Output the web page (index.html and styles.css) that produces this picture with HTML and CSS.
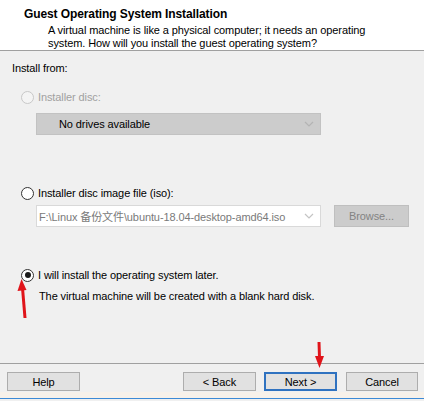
FILE: index.html
```html
<!DOCTYPE html>
<html lang="en">
<head>
  <meta charset="UTF-8" />
  <title>New Virtual Machine Wizard</title>
  <link rel="stylesheet" href="styles.css">
</head>
<body>
  <div class="wizard">
    <!-- page header -->
    <div class="head">
      <h1>Guest Operating System Installation</h1>
      <p>A virtual machine is like a physical computer; it needs an operating<br>system. How will you install the guest operating system?</p>
    </div>

    <div class="page">
      <div class="group-label">Install from:</div>

      <div class="radio disabled"><span class="circle"></span>Installer disc:</div>
      <div class="field-row first">
        <div class="combo off">
          <span class="combo-text">No drives available</span>
          <svg class="chev" width="10" height="6" viewBox="0 0 10 6"><path d="M1 1 L5 5 L9 1" fill="none" stroke="#b4b4b4" stroke-width="1.2"/></svg>
        </div>
      </div>

      <div class="radio iso"><span class="circle"></span>Installer disc image file (iso):</div>
      <div class="field-row second">
        <div class="combo grey">
          <span class="combo-text path">F:\Linux 备份文件\ubuntu-18.04-desktop-amd64.iso</span>
          <svg class="chev" width="10" height="6" viewBox="0 0 10 6"><path d="M1 1 L5 5 L9 1" fill="none" stroke="#c4c4c4" stroke-width="1.2"/></svg>
        </div>
        <button class="btn browse" disabled>Browse...</button>
      </div>

      <div class="radio later checked"><span class="circle"></span>I will install the operating system later.</div>
      <p class="note">The virtual machine will be created with a blank hard disk.</p>
    </div>

    <div class="foot">
      <button class="btn">Help</button>
      <div class="spacer"></div>
      <button class="btn">&lt; Back</button>
      <button class="btn next">Next &gt;</button>
      <button class="btn cancel">Cancel</button>
    </div>
    <div class="edge"></div>

    <!-- red hint arrows drawn over the dialog -->
    <svg class="hint hint-radio" width="14" height="42" viewBox="0 0 14 42">
      <path d="M9 40 L6.5 10" stroke="#e0141a" stroke-width="3" fill="none"/>
      <path d="M5.5 1 L1.5 13 L10.5 12 Z" fill="#e0141a"/>
    </svg>
    <svg class="hint hint-next" width="14" height="28" viewBox="0 0 14 28">
      <path d="M6 0 L6.5 16" stroke="#e0141a" stroke-width="3" fill="none"/>
      <path d="M2 14 L11 14 L6.5 26 Z" fill="#e0141a"/>
    </svg>
  </div>
</body>
</html>
```

FILE: styles.css
```css
body {
  margin: 0;
  background: #f0f0f0;
  font-family: "Liberation Sans", "Noto Sans CJK SC", sans-serif;
  font-size: 11px;
  letter-spacing: -0.1px;
  color: #000;
}
.wizard {
  position: relative;
  width: 424px;
  height: 401px;
  overflow: hidden;
  background: #f0f0f0;
}
.head {
  background: #fff;
  height: 51px;
  box-sizing: border-box;
  border-bottom: 1px solid #a0a0a0;
  padding-top: 6px;
}
.head h1 {
  margin: 0 0 2px 24px;
  font-size: 12px;
  font-weight: bold;
  letter-spacing: -0.1px;
  line-height: 16px;
}
.head p {
  margin: 0 0 0 48px;
  line-height: 13px;
  white-space: nowrap;
}
.page {
  height: 312px;
  box-sizing: border-box;
  padding: 9px 0 0 12px;
}
.group-label {
  line-height: 16px;
}
.radio {
  display: flex;
  align-items: center;
  line-height: 16px;
  margin-left: 9px;
}
.radio .circle {
  width: 11px;
  height: 11px;
  border: 1px solid #333;
  border-radius: 50%;
  background: #fff;
  margin-right: 4px;
  position: relative;
}
.radio.disabled {
  margin-top: 13px;
  color: #a0a0a0;
}
.radio.disabled .circle {
  border-color: #c8c8c8;
  background: #f4f4f4;
}
.radio.iso {
  margin-top: 50px;
}
.radio.later {
  margin-top: 40px;
}
.radio.checked .circle::after {
  content: "";
  position: absolute;
  left: 2.5px;
  top: 2.5px;
  width: 6px;
  height: 6px;
  border-radius: 50%;
  background: #1a1a1a;
}
.field-row {
  display: flex;
  margin-left: 24px;
}
.field-row.first {
  margin-top: 8px;
}
.field-row.second {
  margin-top: 4px;
}
.combo {
  width: 285px;
  height: 22px;
  box-sizing: border-box;
  display: flex;
  align-items: center;
  justify-content: space-between;
  padding: 0 6px 0 2px;
  white-space: nowrap;
}
.combo.off {
  background: #cccccc;
  border: 1px solid #c2c2c2;
}
.combo.off .combo-text {
  padding-left: 20px;
}
.combo.grey {
  background: #fff;
  border: 1px solid #d9d9d9;
}
.combo-text.path {
  color: #7a7a7a;
  padding-right: 6px;
}
.btn {
  font-family: inherit;
  font-size: 11px;
  letter-spacing: -0.1px;
  width: 73px;
  height: 19px;
  padding: 0;
  background: #e1e1e1;
  border: 1px solid #adadad;
  color: #000;
  line-height: 16px;
}
.btn.browse {
  margin-left: 13px;
  width: 75px;
  height: 22px;
  background: #cccccc;
  border-color: #bfbfbf;
  color: #838383;
}
.note {
  margin: 5px 0 0 27px;
  line-height: 16px;
}
.foot {
  display: flex;
  align-items: flex-start;
  border-top: 1px solid #a0a0a0;
  height: 29px;
  box-sizing: border-box;
  padding: 8px 6px 0 7px;
}
.spacer {
  flex: 1;
}
.btn.next {
  margin-left: 8px;
  border: 2px solid #2f72c0;
}
.btn.cancel {
  margin-left: 9px;
  width: 72px;
}
.edge {
  height: 6px;
  background: #f7f1ea;
  border-bottom: 1px solid #3d8ad6;
}
.hint {
  position: absolute;
}
.hint-radio {
  left: 16px;
  top: 278px;
}
.hint-next {
  left: 313px;
  top: 342px;
}
```
